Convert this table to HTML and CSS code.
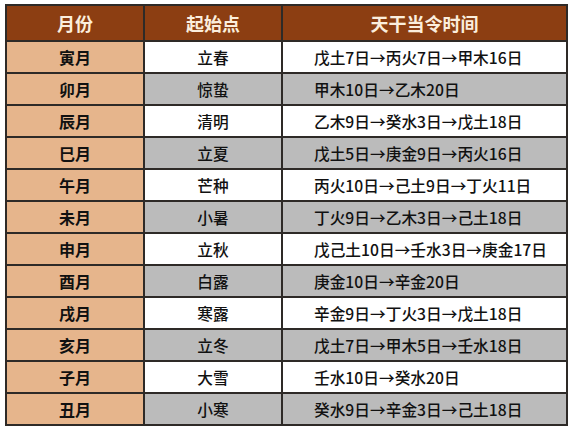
FILE: index.html
```html
<!DOCTYPE html>
<html lang="zh">
<head>
<meta charset="utf-8">
<link rel="stylesheet" href="styles.css">
</head>
<body>
<div class="wrap">
<table class="tbl">
  <colgroup><col class="c1"><col class="c2"><col class="c3"></colgroup>
  <thead>
    <tr><th>月份</th><th>起始点</th><th>天干当令时间</th></tr>
  </thead>
  <tbody>
    <tr class="w"><td class="m">寅月</td><td class="s">立春</td><td class="t">戊土7日→丙火7日→甲木16日</td></tr>
    <tr class="g"><td class="m">卯月</td><td class="s">惊蛰</td><td class="t">甲木10日→乙木20日</td></tr>
    <tr class="w"><td class="m">辰月</td><td class="s">清明</td><td class="t">乙木9日→癸水3日→戊土18日</td></tr>
    <tr class="g"><td class="m">巳月</td><td class="s">立夏</td><td class="t">戊土5日→庚金9日→丙火16日</td></tr>
    <tr class="w"><td class="m">午月</td><td class="s">芒种</td><td class="t">丙火10日→己土9日→丁火11日</td></tr>
    <tr class="g"><td class="m">未月</td><td class="s">小暑</td><td class="t">丁火9日→乙木3日→己土18日</td></tr>
    <tr class="w"><td class="m">申月</td><td class="s">立秋</td><td class="t">戊己土10日→壬水3日→庚金17日</td></tr>
    <tr class="g"><td class="m">酉月</td><td class="s">白露</td><td class="t">庚金10日→辛金20日</td></tr>
    <tr class="w"><td class="m">戌月</td><td class="s">寒露</td><td class="t">辛金9日→丁火3日→戊土18日</td></tr>
    <tr class="g"><td class="m">亥月</td><td class="s">立冬</td><td class="t">戊土7日→甲木5日→壬水18日</td></tr>
    <tr class="w"><td class="m">子月</td><td class="s">大雪</td><td class="t">壬水10日→癸水20日</td></tr>
    <tr class="g"><td class="m">丑月</td><td class="s">小寒</td><td class="t">癸水9日→辛金3日→己土18日</td></tr>
  </tbody>
</table>
</div>
</body>
</html>
```

FILE: styles.css
```css
html, body {
  margin: 0;
  padding: 0;
  background: #ffffff;
}
.wrap {
  padding: 4px 0 0 5px;
}
.tbl {
  border-collapse: collapse;
  table-layout: fixed;
  width: 561px;
  font-family: "Noto Sans CJK SC", "Noto Sans", sans-serif;
  color: #111111;
}
.c1 { width: 138px; }
.c2 { width: 138px; }
.c3 { width: 285px; }
.tbl th, .tbl td {
  border: 2px solid #2e2a27;
  padding: 0;
}
.tbl th {
  background: #8c3e12;
  color: #fbeedd;
  font-size: 18px;
  font-weight: 700;
  height: 34px;
  text-align: center;
}
.tbl td {
  height: 30px;
  font-size: 15.7px;
  font-weight: 500;
}
.tbl td.m {
  background: #e6b58c;
  font-weight: 700;
  text-align: center;
  font-size: 16px;
}
.tbl td.s {
  text-align: center;
}
.tbl td.t {
  text-align: left;
  padding-left: 31px;
}
.w td.s, .w td.t { background: #ffffff; }
.g td.s, .g td.t { background: #bbbbbb; }
```
